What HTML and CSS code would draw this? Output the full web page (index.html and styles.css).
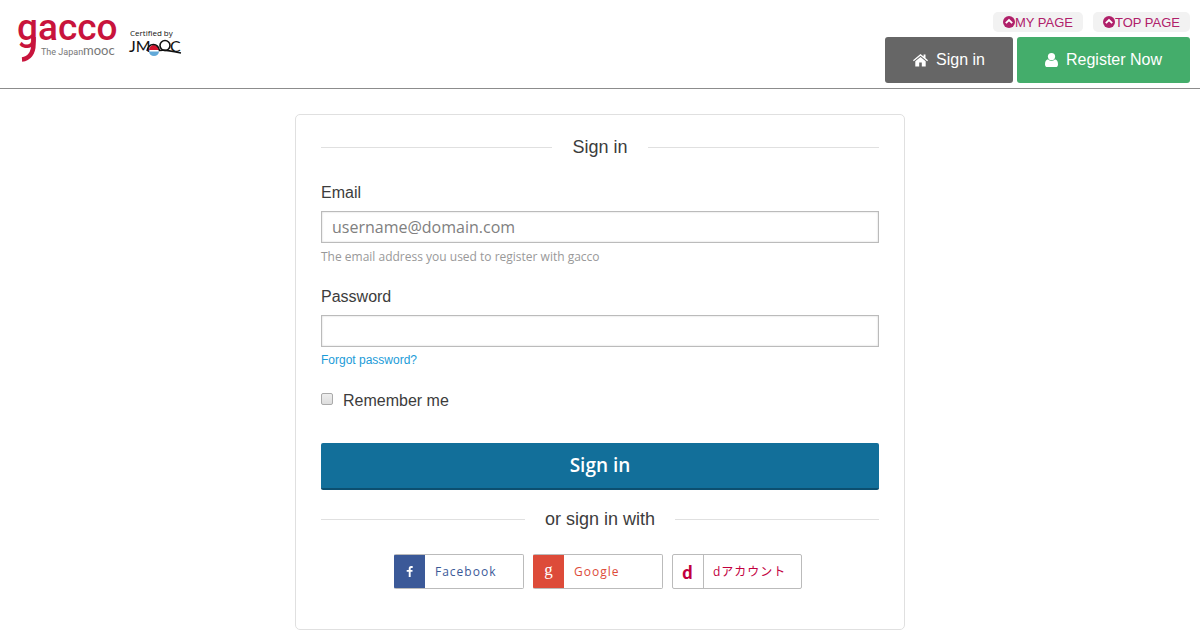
FILE: index.html
```html
<!DOCTYPE html>
<html lang="en">
<head>
  <meta charset="UTF-8" />
  <meta name="viewport" content="width=device-width, initial-scale=1" />
  <title>Sign in | gacco</title>
  <link rel="stylesheet" href="styles.css">
</head>
<body>
  <header class="site-header">
    <a href="#" class="logos" aria-label="gacco home">
      <svg class="logo-gacco" width="104" height="56" viewBox="0 0 104 56">
        <text class="gacco-name" x="0" y="28">gacco</text>
        <path d="M16.500 25V32C16.500 41 12 47 5 47.500" fill="none" stroke="#c8143c" stroke-width="4.500"/>
        <text class="gacco-sub" x="24" y="43">The Japan</text>
        <text class="gacco-mooc" x="66" y="43">mooc</text>
      </svg>
      <svg class="logo-jmooc" width="56" height="32" viewBox="0 0 56 32">
        <text class="jmooc-sub" x="1" y="9">Certified by</text>
        <text class="jmooc-name" x="0" y="25">JM</text>
        <path d="M20 23a5 5 0 0 1 10 0z" fill="#d7142d"/>
        <path d="M20 24.500h10a5 4.500 0 0 1-10 0z" fill="#62a9d8"/>
        <path d="M18 24C20 15 29 16 30.500 23.500C37 22 45 25 52 26" fill="none" stroke="#111" stroke-width="1.6"/>
        <circle cx="36" cy="18.500" r="5" fill="none" stroke="#111" stroke-width="1.6"/>
        <text class="jmooc-name" x="41" y="25">C</text>
      </svg>
    </a>
    <div class="header-nav">
      <nav class="page-links">
        <a href="#"><svg width="12" height="12" viewBox="0 0 12 12"><circle cx="6" cy="6" r="6" fill="#b0206a"/><path d="M2.800 7.200L6 4l3.200 3.200" fill="none" stroke="#fff" stroke-width="1.900"/></svg>MY PAGE</a>
        <a href="#"><svg width="12" height="12" viewBox="0 0 12 12"><circle cx="6" cy="6" r="6" fill="#b0206a"/><path d="M2.800 7.200L6 4l3.200 3.200" fill="none" stroke="#fff" stroke-width="1.900"/></svg>TOP PAGE</a>
      </nav>
      <nav class="account-links">
        <a href="#" class="btn-login">
          <svg width="15" height="14" viewBox="0 0 15 14" fill="#fff"><path d="M7.500 4L2.300 8.300V13.500h3.900V9.600h2.600v3.900h3.900V8.300z"/><path d="M7.500 1L0 7.200l.8 1L7.500 2.700l6.700 5.500.8-1-2.500-2.100V1.500h-1.900v2z"/></svg>
          Sign in
        </a>
        <a href="#" class="btn-register">
          <svg width="13" height="14" viewBox="0 0 13 14" fill="#fff"><circle cx="6.500" cy="3.600" r="3.600"/><path d="M3 6.300C.8 6.800 0 9 0 11.400 0 13 1 14 2.400 14h8.200C12 14 13 13 13 11.400 13 9 12.200 6.800 10 6.300 8 8.400 5 8.400 3 6.300z"/></svg>
          Register Now
        </a>
      </nav>
    </div>
  </header>

  <main class="login-box">
    <form>
      <h2 class="section-title">Sign in</h2>

      <div class="field">
        <label for="email">Email</label>
        <input type="email" id="email" placeholder="username@domain.com">
        <p class="tip">The email address you used to register with gacco</p>
      </div>

      <div class="field">
        <label for="password">Password</label>
        <input type="password" id="password">
        <a href="#" class="forgot">Forgot password?</a>
      </div>

      <div class="remember">
        <input type="checkbox" id="remember">
        <label for="remember">Remember me</label>
      </div>

      <button type="submit" class="btn-submit">Sign in</button>

      <h2 class="section-title">or sign in with</h2>

      <div class="providers">
        <button type="button" class="provider facebook">
          <span class="provider-icon"><svg width="8" height="12" viewBox="0 0 8 12"><path d="M6.700 1H5.200Q3.700 1 3.700 2.600V11M.7 4.900H6.500" fill="none" stroke="#fff" stroke-width="1.900"/></svg></span>
          <span class="provider-name">Facebook</span>
        </button>
        <button type="button" class="provider google">
          <span class="provider-icon">g</span>
          <span class="provider-name">Google</span>
        </button>
        <button type="button" class="provider docomo">
          <span class="provider-icon">d</span>
          <span class="provider-name">dアカウント</span>
        </button>
      </div>
    </form>
  </main>
</body>
</html>
```
FILE: styles.css
```css
* {
  box-sizing: border-box;
}
body {
  margin: 0;
  background: #fff;
  font-family: "Liberation Sans", Arial, sans-serif;
  font-size: 16px;
  color: #3c3c3c;
}
a {
  text-decoration: none;
}
.site-header {
  display: flex;
  justify-content: space-between;
  padding: 12px 10px 5px 17px;
  border-bottom: 1px solid #8c8c8c;
}
.logos {
  display: flex;
  gap: 8px;
}
.logos svg {
  overflow: visible;
}
.logo-jmooc {
  margin-top: 15px;
}
.gacco-name {
  font: 500 37px Roboto, sans-serif;
  fill: #c8143c;
}
.gacco-sub {
  font: 9px Roboto, sans-serif;
  fill: #777;
}
.gacco-mooc {
  font: 13px Lato, sans-serif;
  fill: #777;
}
.jmooc-sub {
  font: 8px "Open Sans", sans-serif;
  fill: #111;
}
.jmooc-name {
  font: 16px Lato, sans-serif;
  fill: #111;
}

/* header links */
.header-nav {
  display: flex;
  flex-direction: column;
  align-items: flex-end;
  gap: 5px;
}
.page-links {
  display: flex;
  gap: 10px;
}
.page-links a {
  display: flex;
  align-items: center;
  height: 20px;
  padding: 0 10px;
  background: #f2f2f2;
  border-radius: 5px;
  font-size: 13px;
  color: #b0206a;
}
.account-links {
  display: flex;
  gap: 4px;
}
.account-links a {
  display: flex;
  align-items: center;
  gap: 8px;
  height: 46px;
  padding: 0 28px;
  border-radius: 3px;
  color: #fff;
}
.btn-login {
  background: #666;
}
.btn-register {
  background: #44ad6b;
}

/* login form */
.login-box {
  max-width: 610px;
  margin: 25px auto 0;
  padding: 20px 25px 40px;
  border: 1px solid #e0e0e0;
  border-radius: 5px;
}
.section-title {
  display: flex;
  align-items: center;
  gap: 20px;
  margin: 0;
  font-size: 18px;
  font-weight: normal;
  line-height: 24px;
}
.section-title::before,
.section-title::after {
  content: "";
  flex: 1;
  border-top: 1px solid #e0e0e0;
}
.field {
  height: 80px;
  margin-top: 24px;
}
.field label {
  display: block;
  margin-bottom: 8px;
  line-height: 20px;
}
.field input {
  display: block;
  width: 100%;
  height: 32px;
  padding: 0 10px;
  border: 1px solid #bbb;
  border-radius: 0;
  box-shadow: inset 0 0 2px rgba(0, 0, 0, 0.2);
  font: 16px "Open Sans", sans-serif;
}
.field input::placeholder {
  color: #808080;
}
.tip {
  margin: 4px 0 0;
  font: 12px/20px "Open Sans", sans-serif;
  color: #999;
}
.forgot {
  display: block;
  margin-top: 3px;
  font-size: 12px;
  line-height: 20px;
  color: #1b9bd8;
}
.remember {
  display: flex;
  align-items: center;
  gap: 10px;
  margin-top: 24px;
  line-height: 20px;
}
.remember input {
  appearance: none;
  width: 12px;
  height: 12px;
  margin: 0 0 4px;
  border: 1px solid #aaa;
  border-radius: 2px;
  background: linear-gradient(#eee, #ddd);
}
.remember input:checked {
  background: #126f9a;
}
.btn-submit {
  display: block;
  width: 100%;
  height: 47px;
  margin: 32px 0 17px;
  padding: 0 0 2px;
  border: 0;
  border-bottom: 2px solid #0c4f70;
  border-radius: 2px;
  background: #126f9a;
  color: #fff;
  font: 600 19px "Open Sans", sans-serif;
  cursor: pointer;
}
.providers {
  display: flex;
  flex-wrap: wrap;
  justify-content: center;
  gap: 9px;
  margin-top: 23px;
  padding-right: 4px;
}
.provider {
  display: flex;
  width: 130px;
  height: 35px;
  padding: 0;
  border: 1px solid #bbb;
  border-radius: 2px;
  background: #fff;
  font: 12px "Open Sans", "Noto Sans CJK JP", sans-serif;
  letter-spacing: 1px;
  cursor: pointer;
}
.provider-icon {
  display: flex;
  align-items: center;
  justify-content: center;
  width: 30px;
  height: 100%;
}
.provider-name {
  padding-left: 10px;
  line-height: 33px;
}
.facebook {
  border-left-color: #3b5998;
  color: #3b5998;
}
.facebook .provider-icon {
  background: #3b5998;
}
.google {
  border-left-color: #dd4b39;
  color: #dd4b39;
}
.google .provider-icon {
  padding-bottom: 4px;
  background: #dd4b39;
  color: #fff;
  font: 17px "Liberation Serif", serif;
}
.docomo {
  color: #c2003e;
}
.docomo .provider-icon {
  width: 31px;
  border-right: 1px solid #bbb;
  font: 900 18px Lato, sans-serif;
}
.docomo .provider-name {
  padding-left: 9px;
}
```
